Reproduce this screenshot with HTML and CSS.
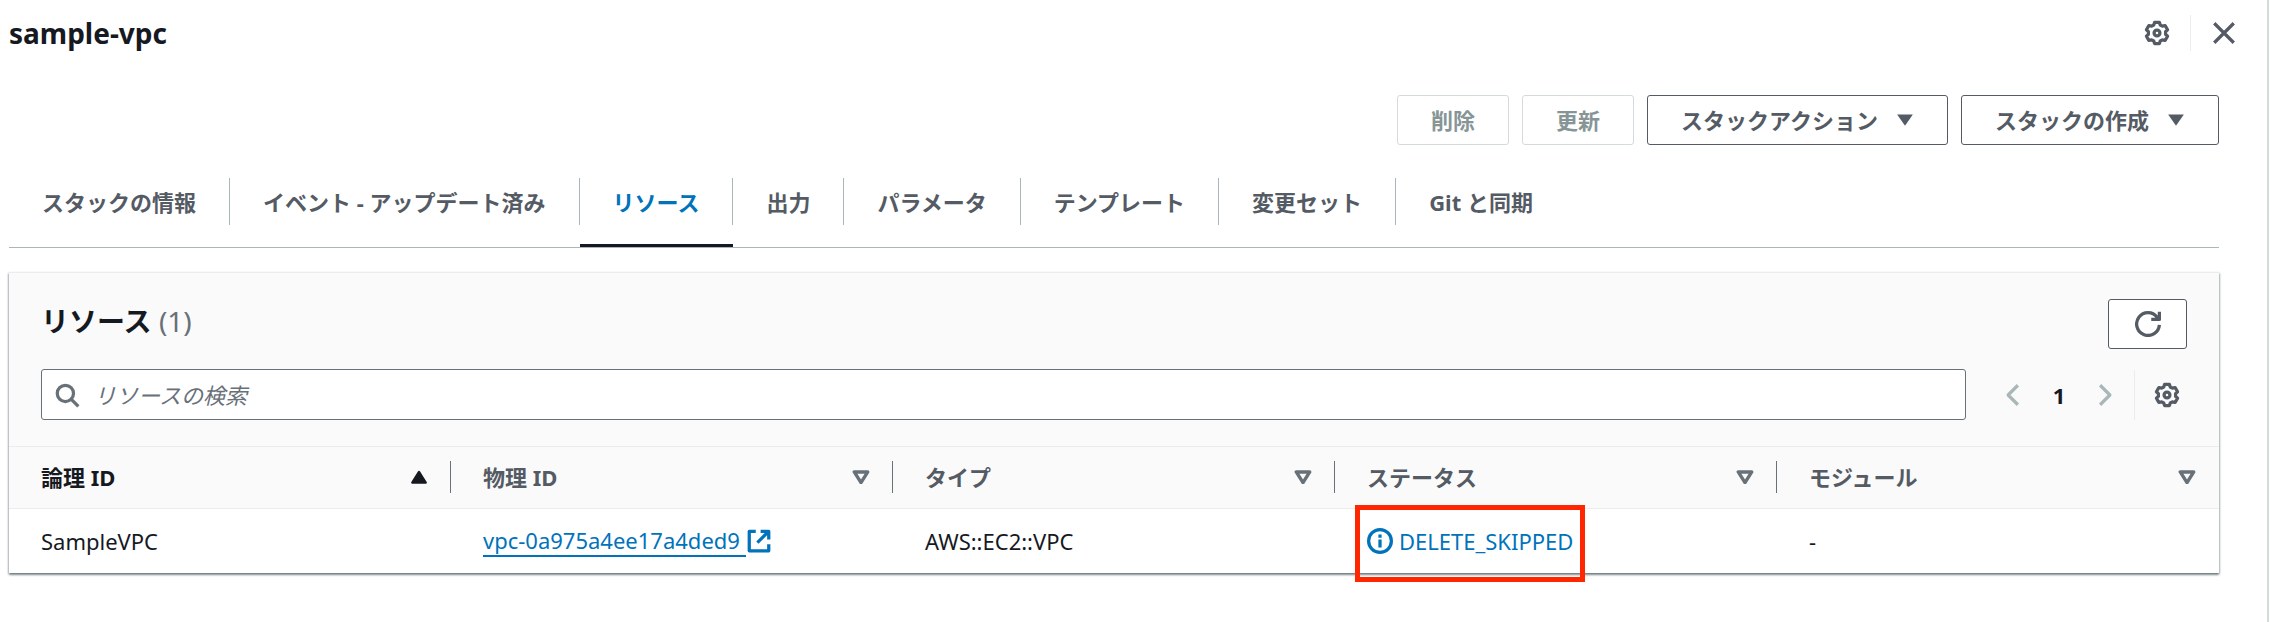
FILE: index.html
```
<!DOCTYPE html>
<html lang="ja">
<head>
    <meta charset="UTF-8">
    <meta name="viewport" content="width=device-width, initial-scale=1.0">
    <title>sample-vpc</title>
    <link rel="stylesheet" href="styles.css">
</head>
<body>
    <svg class="sprite" aria-hidden="true">
        <symbol id="icon-gear" viewBox="0 0 16 16">
            <path d="M6.500 1.500h3l.5 1.600 1.300.7 1.700-.4 1.500 2.600-1.200 1.200v1.600l1.200 1.200-1.500 2.600-1.700-.4-1.300.7-.5 1.600h-3L6 12.900l-1.300-.7-1.700.4L1.500 10l1.200-1.200V7.200L1.500 6 3 3.400l1.700.4L6 3.100z"/>
            <circle cx="8" cy="8" r="1.800"/>
        </symbol>
        <symbol id="icon-sort" viewBox="0 0 16 12">
            <path d="M2 1.500h12L8 11z"/>
        </symbol>
    </svg>

    <main class="panel">
        <header class="panel-header">
            <h1>sample-vpc</h1>
            <div class="panel-tools">
                <button class="icon-btn" aria-label="設定">
                    <svg class="icon"><use href="#icon-gear"/></svg>
                </button>
                <button class="icon-btn close-btn" aria-label="閉じる">
                    <svg class="icon" viewBox="0 0 16 16"><path d="M2 2l12 12M14 2L2 14"/></svg>
                </button>
            </div>
        </header>

        <div class="actions">
            <button class="button" disabled>削除</button>
            <button class="button" disabled>更新</button>
            <button class="button">スタックアクション
                <svg class="caret" viewBox="0 0 16 12"><path d="M1 1h14L8 11z"/></svg>
            </button>
            <button class="button">スタックの作成
                <svg class="caret" viewBox="0 0 16 12"><path d="M1 1h14L8 11z"/></svg>
            </button>
        </div>

        <nav class="tabs">
            <a class="tab" href="#info"><span>スタックの情報</span></a>
            <a class="tab" href="#events"><span>イベント - アップデート済み</span></a>
            <a class="tab active" href="#resources"><span>リソース</span></a>
            <a class="tab" href="#outputs"><span>出力</span></a>
            <a class="tab" href="#parameters"><span>パラメータ</span></a>
            <a class="tab" href="#template"><span>テンプレート</span></a>
            <a class="tab" href="#changesets"><span>変更セット</span></a>
            <a class="tab" href="#git"><span>Git と同期</span></a>
        </nav>

        <section class="card">
            <div class="card-header">
                <div class="card-title">
                    <h2>リソース <span class="count">(1)</span></h2>
                    <button class="button refresh-btn" aria-label="更新">
                        <svg class="icon" viewBox="0 0 16 16"><path d="M15 8.500A7 7 0 1 1 13.600 3.800L14.500 5.200M15 .5V5.200H10"/></svg>
                    </button>
                </div>
                <div class="card-filter">
                    <label class="search">
                        <svg class="icon" viewBox="0 0 16 16"><circle cx="7" cy="7" r="5"/><path d="M10.500 10.500L15 15"/></svg>
                        <input type="text" placeholder="リソースの検索" aria-label="リソースの検索">
                    </label>
                    <div class="pagination">
                        <button class="icon-btn arrow" aria-label="前のページ" disabled>
                            <svg class="icon" viewBox="0 0 16 16"><path d="M11 2L5 8l6 6"/></svg>
                        </button>
                        <button class="page">1</button>
                        <button class="icon-btn arrow" aria-label="次のページ" disabled>
                            <svg class="icon" viewBox="0 0 16 16"><path d="M5 2l6 6-6 6"/></svg>
                        </button>
                    </div>
                    <div class="preferences">
                        <button class="icon-btn" aria-label="設定">
                            <svg class="icon"><use href="#icon-gear"/></svg>
                        </button>
                    </div>
                </div>
            </div>

            <table>
                <thead>
                    <tr>
                        <th class="sorted"><button>論理 ID <svg class="sort" viewBox="0 0 16 12"><path d="M2 11h12L8 1.500z"/></svg></button></th>
                        <th><button>物理 ID <svg class="sort"><use href="#icon-sort"/></svg></button></th>
                        <th><button>タイプ <svg class="sort"><use href="#icon-sort"/></svg></button></th>
                        <th><button>ステータス <svg class="sort"><use href="#icon-sort"/></svg></button></th>
                        <th><button>モジュール <svg class="sort"><use href="#icon-sort"/></svg></button></th>
                    </tr>
                </thead>
                <tbody>
                    <tr>
                        <td>SampleVPC</td>
                        <td>
                            <a class="link" href="#vpc"><span>vpc-0a975a4ee17a4ded9&nbsp;</span><svg class="icon" viewBox="0 0 16 16"><path d="M6 2H2v12h12v-4M9 2h5v5M14 2L7 9"/></svg></a>
                        </td>
                        <td>AWS::EC2::VPC</td>
                        <td>
                            <span class="status">
                                <svg class="icon" viewBox="0 0 16 16"><circle cx="8" cy="8" r="7"/><path d="M8 7v5M8 4v2"/></svg>
                                DELETE_SKIPPED
                            </span>
                        </td>
                        <td>-</td>
                    </tr>
                </tbody>
            </table>
        </section>
    </main>
</body>
</html>
```
FILE: styles.css
```
* {
    margin: 0;
    padding: 0;
    box-sizing: border-box;
}

body {
    font-family: 'Noto Sans', 'Noto Sans CJK JP', sans-serif;
    font-size: 22px;
    line-height: 32px;
    color: #16191f;
    background: #fff;
}

button,
input {
    font: inherit;
    color: inherit;
    background: none;
    border: none;
}

a {
    text-decoration: none;
}

.sprite {
    position: absolute;
    width: 0;
    height: 0;
}

.icon {
    display: block;
    flex: none;
    width: 26px;
    height: 26px;
    fill: none;
    stroke: currentColor;
    stroke-width: 2;
    stroke-linejoin: round;
}

.icon-btn {
    display: flex;
    color: #545b64;
    cursor: pointer;
}

.panel {
    min-height: 100vh;
    margin-right: 1px;
    padding: 14px 48px 48px 9px;
    border-right: 2px solid #d5dbdb;
}

.panel-header {
    display: flex;
    justify-content: space-between;
    align-items: center;
    height: 38px;
    margin-right: -18px;
}

h1 {
    font-size: 28px;
    font-weight: 700;
}

.panel-tools {
    display: flex;
}

.panel-tools .icon-btn {
    padding: 5px 20px;
}

.panel-tools .close-btn {
    padding-right: 0;
    border-left: 1px solid #eaeded;
}

.actions {
    display: flex;
    justify-content: flex-end;
    gap: 13px;
    margin-top: 43px;
}

.button {
    display: flex;
    align-items: center;
    gap: 18px;
    height: 50px;
    padding: 0 33px;
    font-weight: 700;
    color: #545b64;
    background: #fff;
    border: 1px solid #545b64;
    border-radius: 3px;
    cursor: pointer;
}

.button:disabled {
    color: #879596;
    border-color: #d5dbdb;
    cursor: default;
}

.caret {
    width: 18px;
    height: 14px;
    fill: currentColor;
}

.tabs {
    display: flex;
    margin-top: 15px;
    border-bottom: 1px solid #aab7b8;
}

.tab {
    padding: 18px 0 19px;
    font-weight: 700;
    color: #545b64;
    border-bottom: 3px solid transparent;
}

.tab span {
    display: block;
    padding: 8px 33px 7px;
    border-right: 1px solid #aab7b8;
}

.tab:last-child span {
    border-right: none;
}

.tab.active {
    color: #0073bb;
    border-bottom-color: #16191f;
}

.card {
    margin-top: 24px;
    border-top: 1px solid #eaeded;
    box-shadow: 0 2px 2px rgba(0, 28, 36, 0.4), 1px 1px 2px rgba(0, 28, 36, 0.2), -1px 1px 2px rgba(0, 28, 36, 0.2);
}

.card-header {
    padding: 26px 32px;
    background: #fafafa;
}

.card-title {
    display: flex;
    justify-content: space-between;
}

h2 {
    padding-top: 6px;
    font-size: 28px;
    font-weight: 700;
}

.count {
    font-weight: 400;
    color: #687078;
}

.refresh-btn {
    justify-content: center;
    width: 79px;
    padding: 0;
}

.card-filter {
    display: flex;
    align-items: center;
    margin-top: 20px;
}

.search {
    display: flex;
    flex: 1;
    align-items: center;
    gap: 14px;
    height: 51px;
    padding: 0 12px;
    color: #687078;
    background: #fff;
    border: 1px solid #687078;
    border-radius: 3px;
}

.search input {
    flex: 1;
    outline: none;
}

.search input::placeholder {
    color: #687078;
    font-style: italic;
    opacity: 1;
}

.pagination {
    display: flex;
    align-items: center;
    gap: 26px;
    margin: 0 16px 0 34px;
}

.arrow {
    color: #aab7b8;
}

.page {
    width: 14px;
    font-weight: 700;
}

.preferences {
    padding: 12px 7px 12px 19px;
    border-left: 1px solid #eaeded;
}

table {
    width: 100%;
    table-layout: fixed;
    border-collapse: collapse;
}

th {
    padding: 14px 0 15px;
    color: #545b64;
    background: #fafafa;
    border-top: 1px solid #eaeded;
    border-bottom: 1px solid #eaeded;
}

th button {
    display: flex;
    justify-content: space-between;
    align-items: center;
    width: 100%;
    padding: 0 22px 0 32px;
    font-weight: 700;
    border-right: 1px solid #687078;
}

th:last-child button {
    border-right-color: transparent;
}

th.sorted {
    color: #16191f;
}

.sort {
    width: 18px;
    height: 14px;
    fill: none;
    stroke: #687078;
    stroke-width: 3;
    stroke-linejoin: round;
}

.sorted .sort {
    fill: currentColor;
    stroke: currentColor;
    stroke-width: 2;
}

td {
    height: 64px;
    padding: 0 32px;
    white-space: nowrap;
}

.link {
    display: flex;
    align-items: center;
    color: #0073bb;
}

.link span {
    padding-top: 2px;
    line-height: 29px;
    border-bottom: 2px solid #0073bb;
}

.status {
    position: relative;
    display: flex;
    align-items: center;
    gap: 6px;
    width: fit-content;
    color: #0073bb;
}

/* highlight frame drawn over the table */
.status::after {
    content: '';
    position: absolute;
    inset: -20px -12px -25px;
    border: 5px solid #ff2600;
}
```
